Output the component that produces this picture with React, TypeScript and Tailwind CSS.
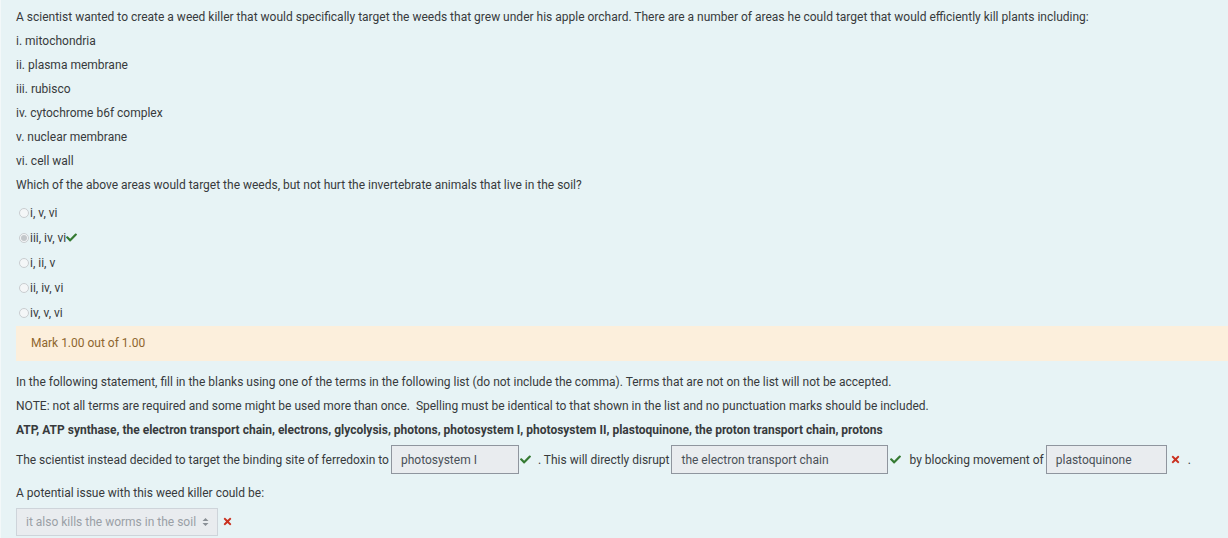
import { FaCheck, FaTimes } from 'react-icons/fa';

const areas = [
  'i. mitochondria',
  'ii. plasma membrane',
  'iii. rubisco',
  'iv. cytochrome b6f complex',
  'v. nuclear membrane',
  'vi. cell wall',
];

const options = [
  { label: 'i, v, vi', checked: false },
  { label: 'iii, iv, vi', checked: true },
  { label: 'i, ii, v', checked: false },
  { label: 'ii, iv, vi', checked: false },
  { label: 'iv, v, vi', checked: false },
];

function Radio({ checked }: { checked: boolean }) {
  return (
    <span className="mr-px flex h-[10px] w-[10px] items-center justify-center rounded-full border border-[#c9cdd0] bg-[#f4f6f7]">
      {checked && <span className="h-[6px] w-[6px] rounded-full bg-[#c3c7ca]" />}
    </span>
  );
}

function Check() {
  return <FaCheck className="h-[11px] w-[11px] text-[#357a32]" />;
}

function Cross() {
  return <FaTimes className="h-[11px] w-[11px] text-[#ca3120]" />;
}

function Blank({ value, width }: { value: string; width: string }) {
  return (
    <span
      className={`flex h-[29px] ${width} items-center border border-[#8f959e] bg-[#e9ecef] px-[9px] text-[#495057]`}
    >
      {value}
    </span>
  );
}

export default function App() {
  return (
    <div
      className="min-h-[538px] border-l border-[#f3f8f9] bg-[#e7f3f5] pt-[8px] text-[12px] text-[#373a3c]"
      style={{ fontFamily: 'Roboto, "Liberation Sans", sans-serif' }}
    >
      <div className="pl-[15px]">
        <p className="mb-[6px] leading-[18px]">
          A scientist wanted to create a weed killer that would specifically target the weeds that grew under his
          apple orchard. There are a number of areas he could target that would efficiently kill plants including:
        </p>
        {areas.map((a) => (
          <p key={a} className="mb-[6px] leading-[18px]">
            {a}
          </p>
        ))}
        <p className="leading-[18px]">
          Which of the above areas would target the weeds, but not hurt the invertebrate animals that live in the soil?
        </p>
        <div className="pt-[6px]">
          {options.map((o) => (
            <div key={o.label} className="flex h-[25.2px] items-center pl-[3px]">
              <Radio checked={o.checked} />
              <span>{o.label}</span>
              {o.checked && <Check />}
            </div>
          ))}
        </div>
        <div className="flex h-[35px] items-center bg-[#fcefdc] px-[15px] text-[#8e662e]">Mark 1.00 out of 1.00</div>
      </div>

      <div className="pl-[15px] pt-[12px]">
        <p className="mb-[6px] leading-[18px]">
          In the following statement, fill in the blanks using one of the terms in the following list (do not include
          the comma). Terms that are not on the list will not be accepted.
        </p>
        <p className="mb-[6px] leading-[18px] whitespace-pre">
          NOTE: not all terms are required and some might be used more than once.  Spelling must be identical to that
          shown in the list and no punctuation marks should be included.
        </p>
        <p className="mb-[6px] font-bold leading-[18px]">
          ATP, ATP synthase, the electron transport chain, electrons, glycolysis, photons, photosystem I, photosystem
          II, plastoquinone, the proton transport chain, protons
        </p>
        <div className="flex h-[30px] items-center">
          <span className="mr-[2px]">The scientist instead decided to target the binding site of ferredoxin to</span>
          <Blank value="photosystem I" width="w-[128px]" />
          <span className="ml-[1px] mr-[7px]">
            <Check />
          </span>
          <span className="mr-[2px]">. This will directly disrupt</span>
          <Blank value="the electron transport chain" width="w-[217px]" />
          <span className="ml-[2px] mr-[8px]">
            <Check />
          </span>
          <span className="mr-[2px]">by blocking movement of</span>
          <Blank value="plastoquinone" width="w-[121px]" />
          <span className="ml-[3px] mr-[7px]">
            <Cross />
          </span>
          <span>.</span>
        </div>
        <p className="mt-[9px] leading-[18px]">A potential issue with this weed killer could be:</p>
        <div className="mt-[6px] flex items-center">
          <span className="flex h-[28px] w-[202px] items-center justify-between border border-[#ced4da] bg-[#e9ecef] pl-[9px] pr-[8px] text-[#9aa0a6]">
            it also kills the worms in the soil
            <svg width="7" height="10" viewBox="0 0 7 10" className="text-[#8a9096]">
              <path d="M3.5 1 L6.5 4 H0.5 Z M3.5 9 L6.5 6 H0.5 Z" fill="currentColor" />
            </svg>
          </span>
          <span className="ml-[4px]">
            <Cross />
          </span>
        </div>
      </div>
    </div>
  );
}
